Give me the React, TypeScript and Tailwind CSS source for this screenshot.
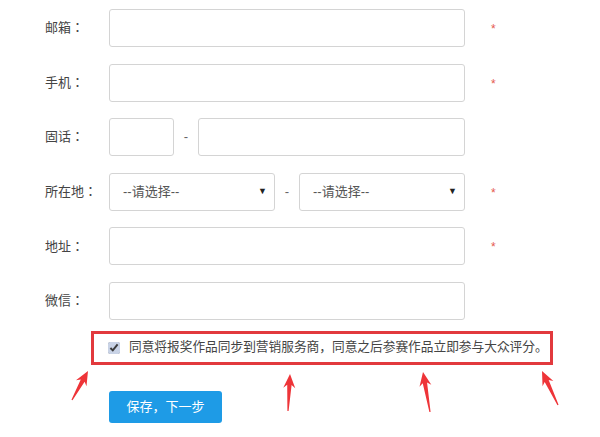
import React from "react";

const FONT = "font-['Liberation_Sans','Noto_Sans_CJK_JP',sans-serif]";

function Label({ text }: { text: string }) {
  return <div className="w-[64px] shrink-0 text-[13px] text-[#444]">{text}</div>;
}

function Field({ className = "" }: { className?: string }) {
  return (
    <input
      type="text"
      className={`h-[38px] rounded-[3px] border border-[#d4d4d4] bg-white px-3 text-[13px] outline-none ${className}`}
    />
  );
}

function Star() {
  return <span className="ml-[26px] mt-[2px] text-[12px] leading-none text-[#e5594f]">*</span>;
}

function Dash() {
  return <span className="w-[24px] shrink-0 text-center text-[13px] text-[#666]">-</span>;
}

function Select() {
  return (
    <div className="relative w-[166px] shrink-0">
      <select className="h-[38px] w-full appearance-none rounded-[3px] border border-[#d4d4d4] bg-white pl-[13px] text-[13px] text-[#555] outline-none">
        <option>--请选择--</option>
      </select>
      <span className="pointer-events-none absolute right-[8px] top-[12px] text-[9px] text-[#222]">▼</span>
    </div>
  );
}

function Row({ label, required, children }: { label: string; required?: boolean; children: React.ReactNode }) {
  return (
    <div className="flex h-[38px] items-center">
      <Label text={label} />
      <div className="flex w-[356px] items-center">{children}</div>
      {required && <Star />}
    </div>
  );
}

// red annotation arrow from tail to tip
function arrowPoints(tx: number, ty: number, hx: number, hy: number) {
  const dx = hx - tx;
  const dy = hy - ty;
  const len = Math.hypot(dx, dy);
  const ux = dx / len;
  const uy = dy / len;
  const nx = -uy;
  const ny = ux;
  const headLen = 14;
  const headW = 6;
  const neckW = 2.2;
  const tailW = 0.6;
  const bx = hx - ux * headLen;
  const by = hy - uy * headLen;
  const pts = [
    [hx, hy],
    [bx + nx * headW, by + ny * headW],
    [bx + nx * neckW + ux * 3, by + ny * neckW + uy * 3],
    [tx + nx * tailW, ty + ny * tailW],
    [tx - nx * tailW, ty - ny * tailW],
    [bx - nx * neckW + ux * 3, by - ny * neckW + uy * 3],
    [bx - nx * headW, by - ny * headW],
  ];
  return pts.map((p) => p.join(",")).join(" ");
}

const ARROWS = [
  [72, 400, 88, 371],
  [288, 411, 290, 374],
  [430, 412, 423, 372],
  [558, 405, 542, 371],
];

export default function App() {
  return (
    <div className={`relative h-[437px] w-[600px] overflow-hidden bg-white ${FONT}`}>
      <div className="flex flex-col gap-[16.6px] pl-[45px] pt-[9px]">
        <Row label="邮箱：" required>
          <Field className="w-full" />
        </Row>
        <Row label="手机：" required>
          <Field className="w-full" />
        </Row>
        <Row label="固话：">
          <Field className="w-[65px] shrink-0" />
          <Dash />
          <Field className="w-[267px] shrink-0" />
        </Row>
        <Row label="所在地：" required>
          <Select />
          <Dash />
          <Select />
        </Row>
        <Row label="地址：" required>
          <Field className="w-full" />
        </Row>
        <Row label="微信：">
          <Field className="w-full" />
        </Row>
      </div>

      <div className="ml-[91px] mt-[11px] flex h-[34px] w-[462px] items-center border-[3px] border-[#e2393d] pl-[14px]">
        <input type="checkbox" defaultChecked className="h-[12px] w-[12px] accent-[#c9d3e6]" />
        <span className="ml-[9px] text-[12.7px] text-[#444]">
          同意将报奖作品同步到营销服务商，同意之后参赛作品立即参与大众评分。
        </span>
      </div>

      <button className="ml-[109px] mt-[26px] h-[32px] w-[113px] rounded-[3px] bg-[#1e9be6] text-[13px] text-white">
        保存，下一步
      </button>

      <svg className="pointer-events-none absolute inset-0" width="600" height="437">
        {ARROWS.map(([tx, ty, hx, hy], i) => (
          <polygon key={i} points={arrowPoints(tx, ty, hx, hy)} fill="#ee3438" />
        ))}
      </svg>
    </div>
  );
}
